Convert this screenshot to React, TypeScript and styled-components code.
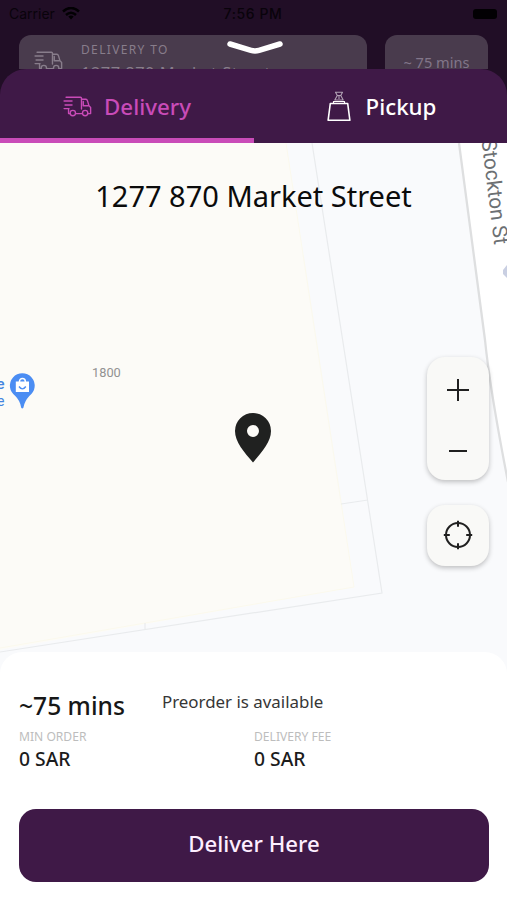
import React from "react";
import styled, { createGlobalStyle } from "styled-components";

const GlobalStyle = createGlobalStyle`
  * { box-sizing: border-box; }
  body { margin: 0; background: #fff; }
  button { font-family: inherit; border: 0; padding: 0; background: none; }
`;

const Screen = styled.main`
  width: 507px;
  height: 900px;
  overflow: hidden;
  display: flex;
  flex-direction: column;
  background: #210e26;
  font-family: "Noto Sans", sans-serif;
`;

const Backdrop = styled.header`
  position: relative;
  height: 69px;
  flex: none;
  overflow: hidden;
`;

const StatusBar = styled.div`
  display: grid;
  grid-template-columns: 1fr auto 1fr;
  align-items: center;
  height: 27px;
  padding: 0 10px 0 9px;
  font: 400 14px/27px Inter, sans-serif;
  color: #09030b;
`;

const Carrier = styled.div`
  display: flex;
  align-items: center;
  gap: 7px;
`;

const Clock = styled.div`
  font-weight: 500;
  letter-spacing: 0.6px;
`;

const Battery = styled.div`
  justify-self: end;
  width: 24px;
  height: 10px;
  border-radius: 3px;
  background: #020003;
`;

const Cards = styled.div`
  display: flex;
  gap: 18px;
  padding: 8px 19px 0;
`;

const AddressCard = styled.div`
  display: flex;
  gap: 18px;
  width: 348px;
  height: 60px;
  padding: 7px 15px;
  border-radius: 12px;
  background: #493b4d;
  color: #887d8b;
`;

const TruckSlot = styled.div`
  padding-top: 9px;
`;

const AddressLabel = styled.div`
  font-size: 12px;
  line-height: 16px;
  letter-spacing: 1.35px;
`;

const AddressValue = styled.div`
  margin-top: 4px;
  font-size: 16.4px;
  line-height: 22px;
  letter-spacing: 0.5px;
  white-space: nowrap;
`;

const TimeCard = styled.div`
  width: 103px;
  height: 60px;
  padding-top: 16px;
  border-radius: 12px;
  background: #493b4d;
  color: #82768a;
  font-size: 14.6px;
  line-height: 22px;
  text-align: center;
`;

const Handle = styled.svg`
  position: absolute;
  left: 226px;
  top: 39px;
`;

const Sheet = styled.section`
  flex: 1;
  display: flex;
  flex-direction: column;
  min-height: 0;
`;

const Tabs = styled.nav`
  display: grid;
  grid-template-columns: 254px 253px;
  height: 74px;
  flex: none;
  border-radius: 26px 26px 0 0;
  background: #3f1947;
  overflow: hidden;
`;

const Tab = styled.button<{ $active?: boolean; $gap: number }>`
  display: flex;
  align-items: center;
  justify-content: center;
  gap: ${(p) => p.$gap}px;
  padding: ${(p) => (p.$active ? "6px 0 0" : "1px 0 0 2px")};
  border-bottom: ${(p) => (p.$active ? "5px solid #c94bb8" : "0")};
  color: ${(p) => (p.$active ? "#c94bb8" : "#fff")};
  font-size: 22.3px;
  font-weight: 500;
  line-height: 30px;
`;

const MapArea = styled.div`
  position: relative;
  height: 535px;
  flex: none;
  background: #f9fafc;
`;

const MapDrawing = styled.svg`
  display: block;
`;

const MapOverlay = styled.div`
  position: absolute;
  inset: 0;
  display: flex;
  flex-direction: column;
  align-items: flex-end;
  padding: 33px 18px 0;
`;

const Address = styled.h1`
  width: 100%;
  margin: 0 0 141px;
  font-size: 29px;
  font-weight: 400;
  line-height: 40px;
  text-align: center;
  color: #0b0b0b;
`;

const ControlCard = styled.div<{ $stacked?: boolean }>`
  display: flex;
  flex-direction: column;
  width: 62px;
  padding-top: ${(p) => (p.$stacked ? 2 : 0)}px;
  margin-bottom: 25px;
  border-radius: 18px;
  background: #f9f9f7;
  box-shadow: 0 2px 5px rgba(0, 0, 0, 0.24);
`;

const ControlButton = styled.button`
  display: flex;
  align-items: center;
  justify-content: center;
  height: 60.5px;
  color: #202020;
`;

const Details = styled.section`
  position: relative;
  flex: 1;
  margin-top: -26px;
  padding: 34px 18px 0 19px;
  border-radius: 22px 22px 0 0;
  background: #fff;
`;

const Summary = styled.div`
  display: flex;
  align-items: flex-start;
  gap: 37px;
  height: 43px;
`;

const Duration = styled.div`
  padding-top: 2px;
  font-size: 24.6px;
  font-weight: 500;
  line-height: 36px;
  color: #171717;
`;

const Preorder = styled.div`
  font-size: 16.9px;
  line-height: 32px;
  color: #363636;
`;

const Fees = styled.div`
  display: grid;
  grid-template-columns: 1fr 1fr;
`;

const FeeLabel = styled.div`
  font-size: 12.1px;
  line-height: 16px;
  color: #bdbdbd;
`;

const FeeValue = styled.div`
  margin-top: 1px;
  font-size: 19.3px;
  font-weight: 500;
  line-height: 25px;
  color: #1c1c1c;
`;

const Submit = styled.button`
  display: block;
  width: 100%;
  height: 73px;
  margin-top: 37.5px;
  padding-bottom: 4px;
  border-radius: 17px;
  background: #3f1947;
  color: #fdeeff;
  font-size: 22.2px;
  font-weight: 500;
`;

function TruckIcon({ width }: { width: number }) {
  return (
    <svg width={width} height={width * 0.72} viewBox="0 0 29 21" fill="none" stroke="currentColor" strokeWidth="1.4" strokeLinecap="round" strokeLinejoin="round">
      <path d="M3 1.2h14.500q1 0 1 1v11M1 5h8M2 9h7M1 12.700h5M5.500 12.700v5h1.400M13 17.700h6M18.500 3.200h4.500q1 0 1.500 1.500l1.500 5 1.700 1.800v6.200H25M20.300 5.500v4.300h5.200" />
      <circle cx="9.8" cy="17.2" r="2.7" />
      <circle cx="22.2" cy="17.2" r="2.7" />
    </svg>
  );
}

function BagIcon() {
  return (
    <svg width="24" height="31" viewBox="0 0 24 31" fill="none" stroke="currentColor" strokeLinejoin="round">
      <path d="M3.300 12.500h17.400l2.200 16.800H1.100Z" strokeWidth="1.600" />
      <path d="M6.500 12v-1.500h11V12" strokeWidth="1.200" />
      <path d="M8.500 1.300h7l-1.700 3.200 2.400 4.500H7.800l2.500-4.500ZM10 4.500h4M12 5v3" strokeWidth="1.100" opacity=".6" />
    </svg>
  );
}

function CityMap() {
  return (
    <MapDrawing width="507" height="535" viewBox="0 143 507 535">
      <path d="M0 143H286L354 587 0 650Z" fill="#fcfbf7" />
      <path d="M286 143 354 587 0 648" fill="none" stroke="#fbf9ed" />
      <path d="M312 143 382 593 0 652M341 504l27-4M145 623v6" fill="none" stroke="#e9ebed" strokeWidth="1.2" />
      <path d="M459 143 485 340Q490 390 508 482V143Z" fill="#fff" />
      <path d="M459 143 485 340Q490 390 508 482" fill="none" stroke="#dedfe0" strokeWidth="2.3" />
      <text transform="translate(481.5 140) rotate(83)" fontFamily="Roboto, sans-serif" fontSize="20.7" fill="#6c7073">Stockton St</text>
      <path d="M503 270l4-5v13l-4-4Z" fill="#c9cfe2" />
      <text x="92" y="377" fontFamily="Roboto, sans-serif" fontSize="12.8" fill="#929292">1800</text>
      <text x="4.500" y="389" textAnchor="end" fontFamily="Roboto, sans-serif" fontSize="15.500" fontWeight="500" fill="#4285df">e</text>
      <text x="4.500" y="406" textAnchor="end" fontFamily="Roboto, sans-serif" fontSize="14" fill="#4285df">e</text>
      <path d="M22.300 408.500q-1.200 0-1.400-2-1-6-5.600-10.600A12.400 12.400 0 1 1 29.300 395.900Q24.700 401 23.700 406.500q-.2 2-1.400 2Z" fill="#4b8df3" />
      <path d="M15.800 381.500h13.200v10.500H15.800Z" fill="#fff" />
      <path d="M19.500 382v-.7a2.900 2.900 0 0 1 5.800 0v.7" fill="none" stroke="#fff" strokeWidth="1.500" />
      <path d="M19 386.500q3.400 4.800 6.800 0" fill="none" stroke="#4b8df3" strokeWidth="1.400" />
      <path fillRule="evenodd" d="M253 413a18 18 0 0 1 18 18c0 11-9 21-18 31.500-9-10.500-18-20.500-18-31.500a18 18 0 0 1 18-18Zm0 12a6 6 0 1 0 0 12 6 6 0 0 0 0-12Z" fill="#202120" />
    </MapDrawing>
  );
}

function App() {
  return (
    <Screen>
      <GlobalStyle />
      <Backdrop>
        <StatusBar>
          <Carrier>
            Carrier
            <svg width="18" height="13" viewBox="0 0 18 13" fill="none" stroke="#020003" strokeWidth="2.500">
              <path d="M1 4.500q8-7 16 0M4 8q5-4.500 10 0" />
              <path d="m9 12.500-2.700-3q2.700-2 5.400 0Z" fill="#020003" stroke="none" />
            </svg>
          </Carrier>
          <Clock>7:56 PM</Clock>
          <Battery />
        </StatusBar>
        <Cards>
          <AddressCard>
            <TruckSlot><TruckIcon width={29} /></TruckSlot>
            <div>
              <AddressLabel>DELIVERY TO</AddressLabel>
              <AddressValue>1277 870 Market Street</AddressValue>
            </div>
          </AddressCard>
          <TimeCard>~ 75 mins</TimeCard>
        </Cards>
        <Handle width="60" height="18" viewBox="0 0 60 18" fill="none">
          <path d="M4 5 25 11.300Q29 12.500 33 11.300L54 5" stroke="#fff" strokeWidth="5.500" strokeLinecap="round" strokeLinejoin="round" />
        </Handle>
      </Backdrop>
      <Sheet>
        <Tabs>
          <Tab $active $gap={12}><TruckIcon width={29} />Delivery</Tab>
          <Tab $gap={15}><BagIcon />Pickup</Tab>
        </Tabs>
        <MapArea>
          <CityMap />
          <MapOverlay>
            <Address>1277 870 Market Street</Address>
            <ControlCard $stacked>
              <ControlButton aria-label="Zoom in">
                <svg width="24" height="24" viewBox="0 0 24 24" fill="none" stroke="currentColor" strokeWidth="2"><path d="M1 13h22M12 2v22" /></svg>
              </ControlButton>
              <ControlButton aria-label="Zoom out">
                <svg width="24" height="24" viewBox="0 0 24 24" fill="none" stroke="currentColor" strokeWidth="2"><path d="M3 13h18" /></svg>
              </ControlButton>
            </ControlCard>
            <ControlCard>
              <ControlButton aria-label="Current location">
                <svg width="30" height="30" viewBox="0 0 30 30" fill="none" stroke="currentColor" strokeWidth="2"><circle cx="15" cy="15" r="12" /><path d="M15 .8v6M15 23.200v6M.8 15h6M23.200 15h6" /></svg>
              </ControlButton>
            </ControlCard>
          </MapOverlay>
        </MapArea>
        <Details>
          <Summary>
            <Duration>~75 mins</Duration>
            <Preorder>Preorder is available</Preorder>
          </Summary>
          <Fees>
            <div><FeeLabel>MIN ORDER</FeeLabel><FeeValue>0 SAR</FeeValue></div>
            <div><FeeLabel>DELIVERY FEE</FeeLabel><FeeValue>0 SAR</FeeValue></div>
          </Fees>
          <Submit>Deliver Here</Submit>
        </Details>
      </Sheet>
    </Screen>
  );
}

export default App;
